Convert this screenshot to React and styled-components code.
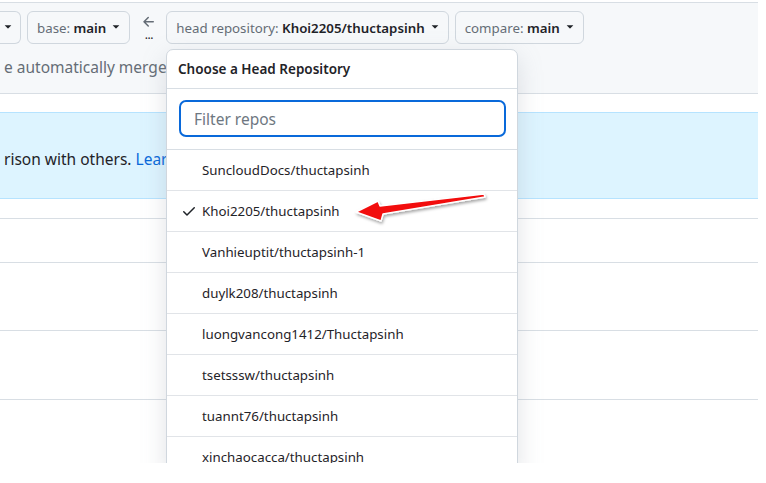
import React from "react";
import styled, { createGlobalStyle } from "styled-components";

const GlobalStyle = createGlobalStyle`
  html, body {
    margin: 0;
    padding: 0;
    background: #ffffff;
  }
  body {
    font-family: "Noto Sans", "Open Sans", sans-serif;
    color: #1f2328;
  }
`;

const repos = [
  "SuncloudDocs/thuctapsinh",
  "Khoi2205/thuctapsinh",
  "Vanhieuptit/thuctapsinh-1",
  "duylk208/thuctapsinh",
  "luongvancong1412/Thuctapsinh",
  "tsetsssw/thuctapsinh",
  "tuannt76/thuctapsinh",
  "xinchaocacca/thuctapsinh",
];

function Caret() {
  return (
    <CaretSvg viewBox="0 0 16 16" width="14" height="14">
      <path d="m4.427 7.427 3.396 3.396a.25.25 0 0 0 .354 0l3.396-3.396A.25.25 0 0 0 11.396 7H4.604a.25.25 0 0 0-.177.427Z" />
    </CaretSvg>
  );
}

function Check() {
  return (
    <CheckSvg viewBox="0 0 16 16" width="16" height="16">
      <path d="M13.78 4.22a.75.75 0 0 1 0 1.06l-7.25 7.25a.75.75 0 0 1-1.06 0L2.22 9.28a.751.751 0 0 1 .018-1.042.751.751 0 0 1 1.042-.018L6 10.94l6.72-6.72a.75.75 0 0 1 1.06 0Z" />
    </CheckSvg>
  );
}

function RedArrow() {
  return (
    <ArrowSvg viewBox="0 0 766 483" width="766" height="483">
      <defs>
        <filter id="sh" x="-10%" y="-50%" width="120%" height="200%">
          <feDropShadow dx="1" dy="2" stdDeviation="1.6" floodColor="#000" floodOpacity="0.35" />
        </filter>
      </defs>
      <polygon
        points="356,212 378,201 380,206 484,194 485,197 383,214 381,221"
        fill="#f20d0d"
        stroke="#ffffff"
        strokeWidth="1.4"
        strokeLinejoin="round"
        filter="url(#sh)"
      />
    </ArrowSvg>
  );
}

function RefButton({ label, value, clipped }) {
  return (
    <RefBox $clipped={clipped}>
      {label && (
        <RefText>
          <Label>{label} </Label>
          <Value>{value}</Value>
        </RefText>
      )}
      <Caret />
    </RefBox>
  );
}

export default function App() {
  return (
    <>
      <GlobalStyle />
      <Frame>
        <RangeBar>
          <ButtonRow>
            <RefButton clipped />
            <RefButton label="base:" value="main" />
            <Swap>
              <svg viewBox="0 0 16 16" width="16" height="16" fill="#656d76">
                <path d="M7.78 12.53a.75.75 0 0 1-1.06 0L2.47 8.28a.75.75 0 0 1 0-1.06l4.25-4.25a.751.751 0 0 1 1.042.018.751.751 0 0 1 .018 1.042L4.81 7h7.44a.75.75 0 0 1 0 1.5H4.81l2.97 2.97a.75.75 0 0 1 0 1.06Z" />
              </svg>
              <Dots>...</Dots>
            </Swap>
            <RefButton label="head repository:" value="Khoi2205/thuctapsinh" />
            <RefButton label="compare:" value="main" />
          </ButtonRow>
          <Hint>e automatically merged.</Hint>
        </RangeBar>
        <Gap />
        <Flash>
          rison with others. <FlashLink>Learn more about diff comparisons here.</FlashLink>
        </Flash>
        <ListRow $h={20} />
        <ListRow $h={44} />
        <ListRow $h={68} />
        <ListRow $h={69} />
        <ListRow $h={80} $last />

        <Menu>
          <MenuHeader>Choose a Head Repository</MenuHeader>
          <FilterBox>
            <FilterInput placeholder="Filter repos" />
          </FilterBox>
          <MenuList>
            {repos.map((r, i) => (
              <MenuItem key={r}>
                <CheckSlot>{i === 1 && <Check />}</CheckSlot>
                <span>{r}</span>
              </MenuItem>
            ))}
          </MenuList>
        </Menu>
        <RedArrow />
      </Frame>
    </>
  );
}

const Frame = styled.div`
  position: relative;
  width: 758px;
  height: 463px;
  overflow: hidden;
  background: #ffffff;
`;

const RangeBar = styled.div`
  margin-top: 2px;
  height: 92px;
  background: #f6f8fa;
  border-top: 1px solid #d8dee4;
  border-bottom: 1px solid #d8dee4;
  box-sizing: border-box;
  padding: 8px 0 0 0;
`;

const ButtonRow = styled.div`
  display: flex;
  align-items: flex-start;
  gap: 6px;
`;

const RefBox = styled.div`
  display: flex;
  align-items: center;
  justify-content: flex-end;
  height: 33px;
  box-sizing: border-box;
  padding: ${(p) => (p.$clipped ? "0 5px 0 0" : "0 6px 0 9px")};
  width: ${(p) => (p.$clipped ? "21px" : "auto")};
  background: #f6f8fa;
  border: 1px solid #d0d7de;
  border-radius: 6px;
  ${(p) => p.$clipped && "border-top-left-radius: 0; border-bottom-left-radius: 0; border-left: none;"}
  font-size: 13.3px;

  svg {
    margin-left: ${(p) => (p.$clipped ? "0" : "3px")};
  }
`;

const RefText = styled.span`
  white-space: pre;
`;

const Label = styled.span`
  color: #656d76;
`;

const Value = styled.span`
  color: #1f2328;
  font-weight: 600;
`;

const CaretSvg = styled.svg`
  fill: #1f2328;
  margin-top: -3px;
`;

const Swap = styled.div`
  display: flex;
  flex-direction: column;
  align-items: center;
  width: 19px;
  margin: 3px 2px 0 3px;
`;

const Dots = styled.span`
  font-size: 12px;
  line-height: 9px;
  color: #1f2328;
  letter-spacing: -0.5px;
`;

const Hint = styled.div`
  margin-top: 12px;
  padding-left: 4px;
  font-size: 15.5px;
  color: #656d76;
  white-space: nowrap;
`;

const Gap = styled.div`
  height: 18px;
`;

const Flash = styled.div`
  height: 87px;
  box-sizing: border-box;
  display: flex;
  align-items: center;
  padding: 6px 0 0 4px;
  background: #ddf4ff;
  border-top: 1px solid #b6e3ff;
  border-bottom: 1px solid #b6e3ff;
  font-size: 15.5px;
  color: #1f2328;
  white-space: pre;
`;

const FlashLink = styled.span`
  color: #0969da;
`;

const ListRow = styled.div`
  height: ${(p) => p.$h}px;
  box-sizing: border-box;
  border-bottom: ${(p) => (p.$last ? "none" : "1px solid #d8dee4")};
`;

const Menu = styled.div`
  position: absolute;
  left: 166px;
  top: 49px;
  width: 352px;
  background: #ffffff;
  border: 1px solid #d0d7de;
  border-radius: 7px;
  box-shadow: 0 8px 24px rgba(140, 149, 159, 0.25);
  box-sizing: border-box;
`;

const MenuHeader = styled.div`
  height: 39px;
  box-sizing: border-box;
  display: flex;
  align-items: center;
  padding-left: 11px;
  font-size: 13.5px;
  font-weight: 600;
  color: #1f2328;
  border-bottom: 1px solid #d8dee4;
`;

const FilterBox = styled.div`
  padding: 11px 11px 12px 12px;
  border-bottom: 1px solid #d8dee4;
`;

const FilterInput = styled.input`
  display: block;
  width: 100%;
  height: 37px;
  box-sizing: border-box;
  border: 2px solid #0969da;
  border-radius: 7px;
  padding: 0 13px;
  font-family: "Noto Sans", "Open Sans", sans-serif;
  font-size: 15.5px;
  color: #1f2328;
  outline: none;
  &::placeholder {
    color: #6e7781;
  }
`;

const MenuList = styled.div`
  display: flex;
  flex-direction: column;
`;

const MenuItem = styled.div`
  display: flex;
  align-items: center;
  height: 41px;
  box-sizing: border-box;
  padding-left: 14px;
  border-bottom: 1px solid #e1e4e8;
  font-size: 13.3px;
  color: #1f2328;
`;

const CheckSlot = styled.span`
  display: inline-flex;
  width: 21px;
  height: 16px;
`;

const CheckSvg = styled.svg`
  fill: #1f2328;
`;

const ArrowSvg = styled.svg`
  position: absolute;
  left: 0;
  top: 0;
  pointer-events: none;
`;
